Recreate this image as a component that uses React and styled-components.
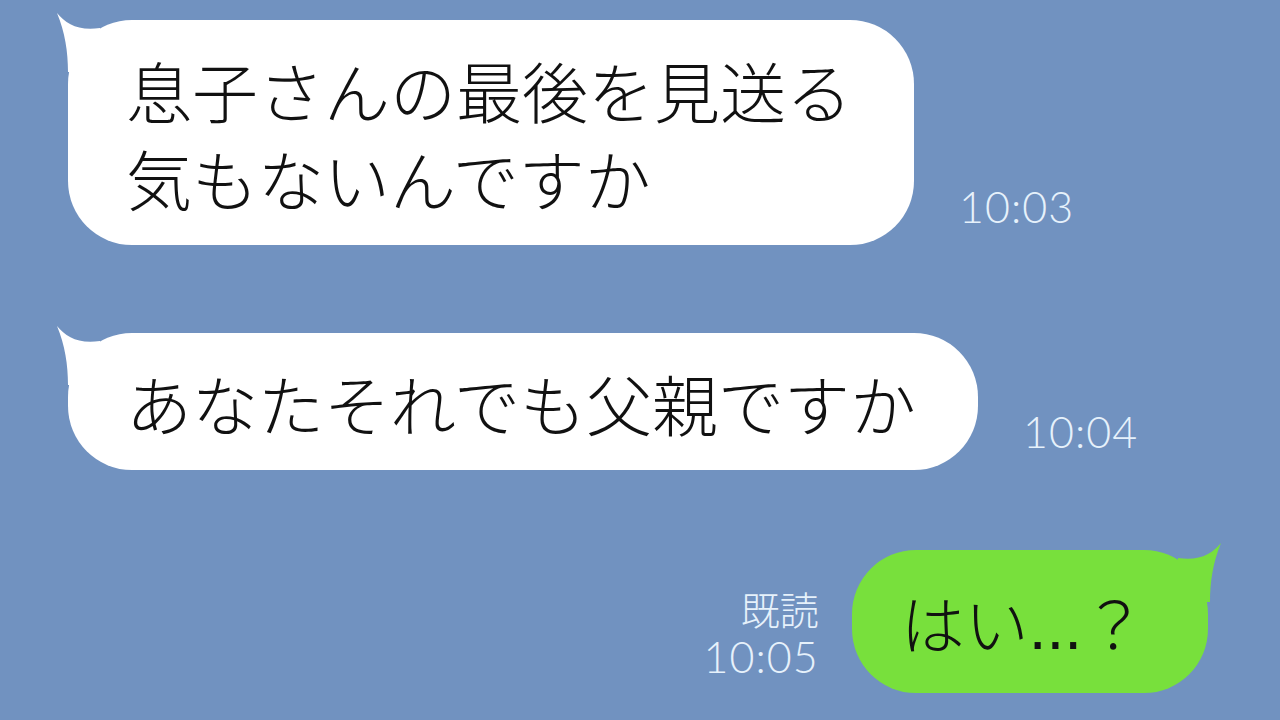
import React from "react";
import styled, { createGlobalStyle } from "styled-components";

const GlobalStyle = createGlobalStyle`
  html, body {
    margin: 0;
    padding: 0;
    background: #7192c0;
  }
  body {
    font-family: "Noto Sans CJK JP", "Noto Sans", sans-serif;
  }
`;

const Chat = styled.div`
  width: 1280px;
  height: 720px;
  background: #7192c0;
  display: flex;
  flex-direction: column;
  overflow: hidden;
`;

const Row = styled.div`
  display: flex;
  align-items: flex-end;
  justify-content: ${(p) => (p.$mine ? "flex-end" : "flex-start")};
  margin-top: ${(p) => p.$top}px;
  padding: ${(p) => (p.$mine ? "0 72px 0 0" : "0 0 0 68px")};
`;

const Bubble = styled.div`
  position: relative;
  background: ${(p) => (p.$mine ? "#78e03c" : "#ffffff")};
  color: #111;
  font-family: "Noto Sans CJK JP", sans-serif;
  font-weight: 300;
  font-size: ${(p) => (p.$mine ? 64 : 66)}px;
  line-height: 88px;
  padding: ${(p) => (p.$mine ? "27px 62px 28px 49px" : "25px 62px 24px 58px")};
  border-radius: 64px;
  white-space: pre-line;
`;

const Tail = styled.svg`
  position: absolute;
  top: -10px;
  ${(p) => (p.$mine ? "right: -16px;" : "left: -14px;")}
  width: 70px;
  height: 70px;
  overflow: visible;
`;

const Dots = styled.span`
  font-family: "Liberation Sans", sans-serif;
  line-height: 0;
`;

const Meta = styled.div`
  display: flex;
  flex-direction: column;
  align-items: ${(p) => (p.$mine ? "flex-end" : "flex-start")};
  margin: ${(p) => (p.$mine ? "0 33px 12px 0" : "0 0 14px 45px")};
  color: #e6f1fb;
  font-family: "Lato", "Noto Sans", sans-serif;
  font-weight: 300;
  font-size: 43px;
  line-height: 48px;
  letter-spacing: 1px;
`;

const Read = styled.span`
  font-family: "Noto Sans CJK JP", sans-serif;
  font-weight: 300;
  font-size: 39px;
  line-height: 50px;
  letter-spacing: 0;
`;

function BubbleTail({ mine }) {
  // the little hooked point at the top corner of a bubble
  const color = mine ? "#78e03c" : "#ffffff";
  return (
    <Tail $mine={mine} viewBox="0 0 70 70" aria-hidden="true">
      <path
        fill={color}
        transform={mine ? "translate(70 0) scale(-1 1)" : undefined}
        d="M3 3 C 12 14 24 21 46 18 L 46 62 L 14 62 C 14 42 11 22 3 3 Z"
      />
    </Tail>
  );
}

function Incoming({ children, time, top }) {
  return (
    <Row $top={top}>
      <Bubble>
        <BubbleTail />
        {children}
      </Bubble>
      <Meta>{time}</Meta>
    </Row>
  );
}

function Outgoing({ children, time, top }) {
  return (
    <Row $mine $top={top}>
      <Meta $mine>
        <Read>既読</Read>
        {time}
      </Meta>
      <Bubble $mine>
        <BubbleTail mine />
        {children}
      </Bubble>
    </Row>
  );
}

export default function App() {
  return (
    <>
      <GlobalStyle />
      <Chat>
        <Incoming top={20} time="10:03">
          {"息子さんの最後を見送る\n気もないんですか"}
        </Incoming>
        <Incoming top={88} time="10:04">
          あなたそれでも父親ですか
        </Incoming>
        <Outgoing top={80} time="10:05">
          はい<Dots>...</Dots>？
        </Outgoing>
      </Chat>
    </>
  );
}
